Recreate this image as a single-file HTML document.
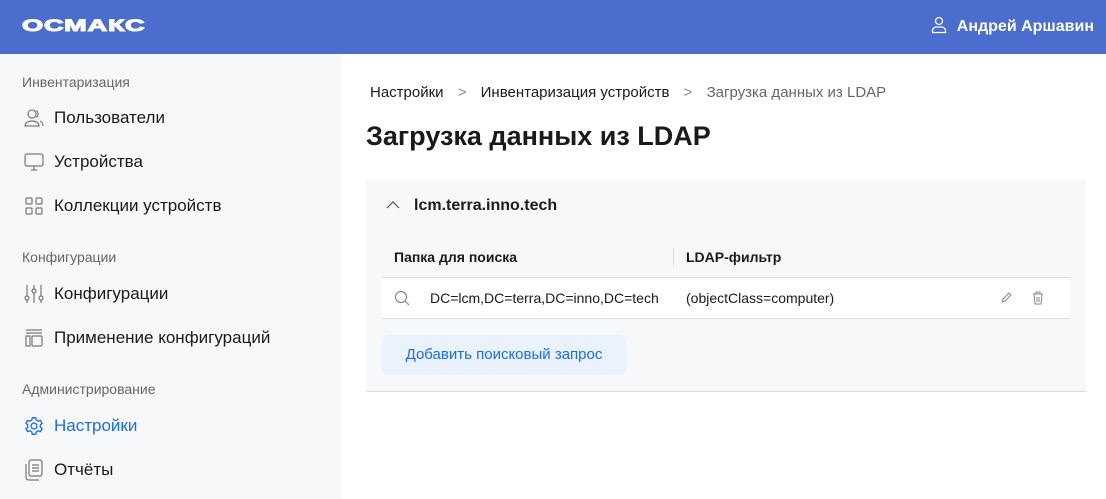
<!DOCTYPE html>
<html><head><meta charset="utf-8"><style>
*{margin:0;padding:0;box-sizing:border-box}
body{width:1106px;height:499px;overflow:hidden;font-family:"Liberation Sans","DejaVu Sans",sans-serif;background:#fff;color:#1a1a1a;position:relative}
.hdr{position:absolute;left:0;top:0;width:1106px;height:54px;background:#4a6dce}
.logo{position:absolute;left:22px;top:16px;color:#fff;font-weight:900;font-size:17px;line-height:20px;letter-spacing:0.5px;transform:scaleX(1.6);transform-origin:left;-webkit-text-stroke:1px #fff}
.user{position:absolute;right:12px;top:18px;color:#fff;font-weight:bold;font-size:16px}
.side{position:absolute;left:0;top:54px;width:342px;height:445px;background:#f7f8fa}
.sec{position:absolute;left:22px;font-size:14px;color:#666}
.item{position:absolute;left:54px;font-size:17px;color:#1a1a1a}
.ic{position:absolute;left:24px}
.abs{position:absolute}
</style></head><body>
<div class="hdr"><div class="logo">ОСМАКС</div>
<svg class="abs" style="left:931px;top:16px" width="16" height="18" viewBox="0 0 16 18" fill="none" stroke="#fff" stroke-width="1.3"><circle cx="8" cy="5" r="3.5"/><path d="M1.5 16.5v-2c0-2 2-3.5 4-3.5h5c2 0 4 1.5 4 3.5v2z"/></svg>
<div class="user">Андрей Аршавин</div></div>
<div class="side">
<div class="sec" style="top:20px">Инвентаризация</div>
<svg class="ic" style="top:54px" width="20" height="20" viewBox="0 0 20 20" fill="none" stroke="#777" stroke-width="1.2"><circle cx="8" cy="6" r="4"/><path d="M1 18c0-3 3-5 7-5s7 2 7 5z"/><path d="M12 2.5a4 4 0 010 7M16 13c2 1 3 2.5 3 5"/></svg>
<div class="item" style="top:54px">Пользователи</div>
<svg class="ic" style="top:98px" width="20" height="20" viewBox="0 0 20 20" fill="none" stroke="#777" stroke-width="1.2"><rect x="1" y="2" width="18" height="12" rx="2"/><path d="M7 18h6M10 14v4"/></svg>
<div class="item" style="top:98px">Устройства</div>
<svg class="ic" style="top:142px" width="20" height="20" viewBox="0 0 20 20" fill="none" stroke="#777" stroke-width="1.2"><rect x="2" y="2" width="6" height="6" rx="1"/><rect x="12" y="2" width="6" height="6" rx="1"/><rect x="2" y="12" width="6" height="6" rx="1"/><rect x="12" y="12" width="6" height="6" rx="1"/></svg>
<div class="item" style="top:142px">Коллекции устройств</div>
<div class="sec" style="top:195px">Конфигурации</div>
<svg class="ic" style="top:230px" width="20" height="20" viewBox="0 0 20 20" fill="none" stroke="#777" stroke-width="1.2"><path d="M3 1v11M3 16v3M10 1v4M10 9v10M17 1v11M17 16v3"/><circle cx="3" cy="14" r="2"/><circle cx="10" cy="7" r="2"/><circle cx="17" cy="14" r="2"/></svg>
<div class="item" style="top:230px">Конфигурации</div>
<svg class="ic" style="top:274px" width="20" height="20" viewBox="0 0 20 20" fill="none" stroke="#777" stroke-width="1.2"><path d="M2 2h16M2 5h16"/><rect x="2" y="8" width="4" height="10"/><rect x="8" y="8" width="10" height="10" rx="1"/></svg>
<div class="item" style="top:274px">Применение конфигураций</div>
<div class="sec" style="top:327px">Администрирование</div>
<svg class="ic" style="top:362px" width="20" height="20" viewBox="0 0 24 24" fill="none" stroke="#1a6cf0" stroke-width="1.6"><circle cx="12" cy="12" r="3.5"/><path d="M10 2h4l.6 2.8 2.4 1.4 2.7-.9 2 3.4-2.1 1.9v2.8l2.1 1.9-2 3.4-2.7-.9-2.4 1.4L14 22h-4l-.6-2.8-2.4-1.4-2.7.9-2-3.4 2.1-1.9v-2.8L2.3 8.7l2-3.4 2.7.9 2.4-1.4z"/></svg>
<div class="item" style="top:362px;color:#1a6cf0">Настройки</div>
<svg class="ic" style="top:405px" width="20" height="22" viewBox="0 0 20 22" fill="none" stroke="#777" stroke-width="1.2"><rect x="5" y="1" width="13" height="16" rx="2"/><path d="M2 5v13c0 2 1 3 3 3h10M8 6h7M8 9h7M8 12h7"/></svg>
<div class="item" style="top:406px">Отчёты</div>
</div>
<div class="abs" style="left:370px;top:84px;font-size:15px;color:#1a1a1a">Настройки <span style="color:#888;margin:0 10px">&gt;</span> Инвентаризация устройств <span style="color:#888;margin:0 10px">&gt;</span> <span style="color:#666">Загрузка данных из LDAP</span></div>
<div class="abs" style="left:366px;top:121px;font-size:27px;font-weight:bold">Загрузка данных из LDAP</div>
<div class="abs" style="left:366px;top:180px;width:720px;height:212px;background:#f7f8fa;border-bottom:1px solid #ddd">
<svg class="abs" style="left:20px;top:20px" width="14" height="10" viewBox="0 0 14 10" fill="none" stroke="#555" stroke-width="1.2"><path d="M1 8l6-6 6 6"/></svg>
<div class="abs" style="left:48px;top:17px;font-size:16px;font-weight:bold">lcm.terra.inno.tech</div>
<div class="abs" style="left:28px;top:69px;font-size:14px;font-weight:bold">Папка для поиска</div>
<div class="abs" style="left:307px;top:68px;width:1px;height:18px;background:#ddd"></div>
<div class="abs" style="left:320px;top:69px;font-size:14px;font-weight:bold">LDAP-фильтр</div>
<div class="abs" style="left:16px;top:97px;width:688px;height:42px;background:#fff;border-top:1px solid #ddd;border-bottom:1px solid #ddd">
<svg class="abs" style="left:12px;top:12px" width="16" height="16" viewBox="0 0 16 16" fill="none" stroke="#888" stroke-width="1.2"><circle cx="7" cy="7" r="5.5"/><path d="M11 11l4 4"/></svg>
<div class="abs" style="left:48px;top:12px;font-size:14px">DC=lcm,DC=terra,DC=inno,DC=tech</div>
<div class="abs" style="left:304px;top:12px;font-size:14px">(objectClass=computer)</div>
<svg class="abs" style="left:618px;top:14px" width="12" height="12" viewBox="0 0 12 12" fill="none" stroke="#888" stroke-width="1"><path d="M2 10l1-3 6-6 2 2-6 6z"/></svg>
<svg class="abs" style="left:650px;top:13px" width="12" height="14" viewBox="0 0 12 14" fill="none" stroke="#888" stroke-width="1"><path d="M1 3h10M4 3V1h4v2M2 3l1 10h6l1-10M5 6v5M7 6v5"/></svg>
</div>
<div class="abs" style="left:16px;top:155px;width:244px;height:40px;background:#eaf2fd;border-radius:6px;color:#1a6cf0;font-size:15px;line-height:40px;text-align:center">Добавить поисковый запрос</div>
</div>
</body></html>
